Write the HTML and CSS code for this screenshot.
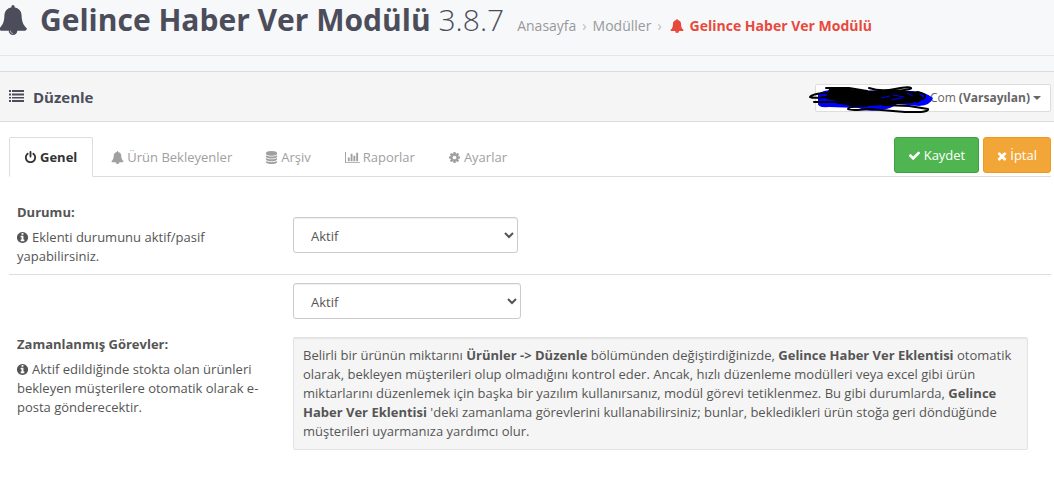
FILE: index.html
```html
<!DOCTYPE html>
<html lang="tr">
<head>
  <meta charset="UTF-8" />
  <meta name="viewport" content="width=device-width, initial-scale=1.0"/>
  <title>Gelince Haber Ver Modülü</title>
  <link rel="stylesheet" href="styles.css">
</head>
<body>

  <!-- shared icons -->
  <svg class="sprite" aria-hidden="true">
    <symbol id="bell" viewBox="0 0 1792 1792"><path d="M912 1696q0-16-16-16-59 0-101.500-42.500t-42.500-101.500q0-16-16-16t-16 16q0 73 51.500 124.500t124.500 51.500q16 0 16-16zm816-288q0 52-38 90t-90 38h-448q0 106-75 181t-181 75-181-75-75-181h-448q-52 0-90-38t-38-90q50-42 91-88t85-119.500 74.500-158.500 50-206 19.500-260q0-152 117-282.500t307-158.500q-8-19-8-39 0-40 28-68t68-28 68 28 28 68q0 20-8 39 190 28 307 158.500t117 282.500q0 139 19.500 260t50 206 74.500 158.500 85 119.500 91 88z"/></symbol>
    <symbol id="power" viewBox="0 0 1792 1792"><path d="M1664 896q0 156-61 298t-164 245-245 164-298 61-298-61-245-164-164-245-61-298q0-182 80.500-343t226.500-270q43-32 95.500-25t83.500 50q32 42 24.500 94.500t-49.500 84.500q-98 74-151.500 181t-53.500 228q0 104 40.500 198.500t109.500 163.500 163.500 109.500 198.500 40.500 198.500-40.500 163.500-109.500 109.500-163.500 40.500-198.500q0-121-53.500-228t-151.500-181q-42-32-49.500-84.500t24.500-94.500q31-43 84-50t95 25q146 109 226.500 270t80.500 343zm-640-768v640q0 52-38 90t-90 38-90-38-38-90v-640q0-52 38-90t90-38 90 38 38 90z"/></symbol>
    <symbol id="database" viewBox="0 0 1792 1792"><path d="M896 768q237 0 443-43t325-127v170q0 69-103 128t-280 93.500-385 34.500-385-34.500-280-93.500-103-128v-170q119 84 325 127t443 43zm0 768q237 0 443-43t325-127v170q0 69-103 128t-280 93.500-385 34.500-385-34.500-280-93.500-103-128v-170q119 84 325 127t443 43zm0-384q237 0 443-43t325-127v170q0 69-103 128t-280 93.500-385 34.500-385-34.500-280-93.500-103-128v-170q119 84 325 127t443 43zm0-1152q208 0 385 34.500t280 93.500 103 128v128q0 69-103 128t-280 93.500-385 34.500-385-34.500-280-93.500-103-128v-128q0-69 103-128t280-93.500 385-34.500z"/></symbol>
    <symbol id="chart" viewBox="0 0 2048 1792"><path d="M640 896v512h-256v-512h256zm384-512v1024h-256v-1024h256zm1024 1152v128h-2048v-1536h128v1408h1920zm-640-896v768h-256v-768h256zm384-384v1152h-256v-1152h256z"/></symbol>
    <symbol id="cog" viewBox="0 0 1792 1792"><path d="M1152 896q0-106-75-181t-181-75-181 75-75 181 75 181 181 75 181-75 75-181zm512-109v222q0 12-8 23t-20 13l-185 28q-19 54-39 91 35 50 107 138 10 12 10 25t-9 23q-27 37-99 108t-94 71q-12 0-26-9l-138-108q-44 23-91 38-16 136-29 186-7 28-36 28h-222q-14 0-24.500-8.500t-11.500-21.500l-28-184q-49-16-90-37l-141 107q-10 9-25 9-14 0-25-11-126-114-165-168-7-10-7-23 0-12 8-23 15-21 51-66.500t54-70.500q-27-50-41-99l-183-27q-13-2-21-12.500t-8-23.500v-222q0-12 8-23t19-13l186-28q14-46 39-92-40-57-107-138-10-12-10-24 0-10 9-23 26-36 98.500-107.500t94.500-71.500q13 0 26 10l138 107q44-23 91-38 16-136 29-186 7-28 36-28h222q14 0 24.500 8.500t11.500 21.500l28 184q49 16 90 37l142-107q9-9 24-9 13 0 25 10 129 119 165 170 7 8 7 22 0 12-8 23-15 21-51 66.500t-54 70.500q26 50 41 98l183 28q13 2 21 12.500t8 23.500z"/></symbol>
    <symbol id="check" viewBox="0 0 1792 1792"><path d="M1671 566q0 40-28 68l-724 724-136 136q-28 28-68 28t-68-28l-136-136-362-362q-28-28-28-68t28-68l136-136q28-28 68-28t68 28l294 295 656-657q28-28 68-28t68 28l136 136q28 28 28 68z"/></symbol>
    <symbol id="times" viewBox="200 200 1392 1392"><path d="M1490 1322q0 40-28 68l-136 136q-28 28-68 28t-68-28l-294-294-294 294q-28 28-68 28t-68-28l-136-136q-28-28-28-68t28-68l294-294-294-294q-28-28-28-68t28-68l136-136q28-28 68-28t68 28l294 294 294-294q28-28 68-28t68 28l136 136q28 28 28 68t-28 68l-294 294 294 294q28 28 28 68z"/></symbol>
    <symbol id="list" viewBox="0 0 15 12"><path d="M0 0h2v2H0zM3 0h12v2H3zM0 4h2v1H0zM3 4h12v1H3zM0 7h2v1H0zM3 7h12v1H3zM0 10h2v2H0zM3 10h12v2H3z"/><path opacity=".5" d="M0 3h2v1H0zM3 3h12v1H3zM0 5h2v1H0zM3 5h12v1H3zM0 8h2v1H0zM3 8h12v1H3z"/></symbol>
    <symbol id="info" viewBox="0 0 1792 1792"><path d="M1152 1376v-160q0-14-9-23t-23-9h-96v-512q0-14-9-23t-23-9h-320q-14 0-23 9t-9 23v160q0 14 9 23t23 9h96v320h-96q-14 0-23 9t-9 23v160q0 14 9 23t23 9h448q14 0 23-9t9-23zm-128-896v-160q0-14-9-23t-23-9h-192q-14 0-23 9t-9 23v160q0 14 9 23t23 9h192q14 0 23-9t9-23zm640 416q0 209-103 385.500t-279.500 279.500-385.500 103-385.500-103-279.500-279.500-103-385.500 103-385.500 279.500-279.500 385.500-103 385.500 103 279.500 279.500 103 385.500z"/></symbol>
  </svg>

  <header class="page-header">
    <h1><svg class="title-icon"><use href="#bell"/></svg><strong>Gelince Haber Ver Modülü</strong> 3.8.7</h1>
    <nav class="breadcrumb">
      <a href="#">Anasayfa</a>
      <span class="sep">›</span>
      <a href="#">Modüller</a>
      <span class="sep">›</span>
      <a href="#" class="current"><svg class="icon"><use href="#bell"/></svg>Gelince Haber Ver Modülü</a>
    </nav>
  </header>

  <div class="panel-heading">
    <h2><svg class="list-icon"><use href="#list"/></svg>Düzenle</h2>
    <button type="button" class="store-btn">Com <b>(Varsayılan)</b><span class="caret"></span>
      <!-- store name scribbled out -->
      <svg class="scribble" viewBox="0 0 126 28" aria-hidden="true">
        <path fill="#0000ff" d="M9 8Q14 4 24 4L104 5Q117 6 124 12 122 19 110 20L88 18Q82 23 72 24 58 26 50 22L20 21Q8 22 9 17Z"/>
        <path fill="#000" d="M20 3L42 3 58 5 82 4 108 6 114 11 108 16 84 17 66 19 40 19 28 15 17 11Z"/>
        <g fill="none" stroke="#000" stroke-width="2" stroke-linecap="round" stroke-linejoin="round">
          <path d="M17 2L40 2 58 5M60 2Q72 6 86 3T102 2Q104 4 72 6M22 7Q4 7 1 11 5 13 26 10M5 16L26 16 48 20M17 12L60 19 104 16"/>
          <path d="M58 20Q40 20 39 23 42 25 60 23L96 26 112 26Q120 25 119 23L100 20 74 19M108 6Q119 8 115 12L108 16"/>
        </g>
        <path fill="none" stroke="#0000ff" d="M72 12L81 10M84 9L95 11M82 14L93 12M98 7L104 10"/>
      </svg>
    </button>
  </div>

  <main class="content">
    <div class="toolbar">
      <nav class="tabs">
        <a href="#" class="active"><svg class="icon narrow"><use href="#power"/></svg>Genel</a>
        <a href="#"><svg class="icon"><use href="#bell"/></svg>Ürün Bekleyenler</a>
        <a href="#"><svg class="icon narrow"><use href="#database"/></svg>Arşiv</a>
        <a href="#"><svg class="icon wide"><use href="#chart"/></svg>Raporlar</a>
        <a href="#"><svg class="icon narrow"><use href="#cog"/></svg>Ayarlar</a>
      </nav>
      <div class="actions">
        <button type="button" class="btn save"><svg class="icon"><use href="#check"/></svg>Kaydet</button>
        <button type="button" class="btn cancel"><svg class="icon small"><use href="#times"/></svg>İptal</button>
      </div>
    </div>

    <form>
      <div class="row">
        <div class="desc">
          <label for="status">Durumu:</label>
          <p><svg class="icon narrow"><use href="#info"/></svg>Eklenti durumunu aktif/pasif yapabilirsiniz.</p>
        </div>
        <div class="field">
          <select id="status" class="status">
            <option>Aktif</option>
            <option>Pasif</option>
          </select>
        </div>
      </div>

      <div class="row">
        <div class="desc">
          <label for="cron">Zamanlanmış Görevler:</label>
          <p><svg class="icon narrow"><use href="#info"/></svg>Aktif edildiğinde stokta olan ürünleri bekleyen müşterilere otomatik olarak e-posta gönderecektir.</p>
        </div>
        <div class="field">
          <select id="cron" class="cron">
            <option>Aktif</option>
            <option>Pasif</option>
          </select>
          <div class="well">Belirli bir ürünün miktarını <b>Ürünler -&gt; Düzenle</b> bölümünden değiştirdiğinizde, <b>Gelince Haber Ver Eklentisi</b> otomatik olarak, bekleyen müşterileri olup olmadığını kontrol eder. Ancak, hızlı düzenleme modülleri veya excel gibi ürün miktarlarını düzenlemek için başka bir yazılım kullanırsanız, modül görevi tetiklenmez. Bu gibi durumlarda, <b>Gelince Haber Ver Eklentisi</b> 'deki zamanlama görevlerini kullanabilirsiniz; bunlar, bekledikleri ürün stoğa geri döndüğünde müşterileri uyarmanıza yardımcı olur.</div>
        </div>
      </div>
    </form>
  </main>

</body>
</html>
```
FILE: styles.css
```css
* {
  box-sizing: border-box;
}
body {
  margin: 0;
  background: #fff;
  color: #555;
  font-family: "Open Sans", sans-serif;
  font-size: 13px;
  line-height: 19px;
}
a {
  color: inherit;
  text-decoration: none;
}
svg {
  fill: currentColor;
}
.sprite {
  position: absolute;
  width: 0;
  height: 0;
}
.icon {
  width: 13px;
  height: 13px;
  margin-right: 3px;
  vertical-align: -2px;
}
.icon.wide {
  width: 15px;
}
.icon.narrow {
  margin-left: -1px;
}
.icon.small {
  width: 10px;
  height: 10px;
  vertical-align: -1px;
}

/* page title */
.page-header {
  display: flex;
  align-items: baseline;
  gap: 13px;
  height: 56px;
  background: #f7f8fa;
  border-bottom: 1px solid #e4e6e8;
}
h1 {
  margin: 0;
  color: #4c4d5a;
  font-size: 30px;
  font-weight: 300;
  line-height: 40px;
  white-space: nowrap;
}
h1 strong {
  font-weight: 700;
}
.title-icon {
  width: 30px;
  height: 30px;
  margin: 0 12px 0 -2px;
  vertical-align: -4px;
}
.breadcrumb {
  display: flex;
  gap: 6px;
  color: #999;
  font-size: 14px;
  white-space: nowrap;
}
.breadcrumb .sep {
  color: #bbb;
}
.breadcrumb .current {
  margin-left: 2px;
  color: #e9493c;
  font-weight: 700;
}
.breadcrumb .icon {
  width: 14px;
  height: 14px;
  margin-right: 6px;
}

/* panel heading */
.panel-heading {
  display: flex;
  align-items: center;
  justify-content: space-between;
  height: 51px;
  margin-top: 15px;
  padding: 2px 3px 0 9px;
  background: #f5f5f5;
  border-top: 1px solid #dcdcdc;
  border-bottom: 1px solid #dcdcdc;
  box-shadow: 0 -15px #f7f8fa;
}
h2 {
  margin: 0;
  color: #4c4d5a;
  font-size: 15px;
  font-weight: 700;
}
.list-icon {
  width: 15px;
  height: 12px;
  margin-right: 9px;
  vertical-align: 1px;
}
.store-btn {
  position: relative;
  display: flex;
  align-items: center;
  justify-content: flex-end;
  gap: 3px;
  width: 236px;
  height: 28px;
  padding: 0 9px;
  background: #fff;
  border: 1px solid #ddd;
  border-radius: 2px;
  color: #666;
  font: 12px "Open Sans", sans-serif;
  cursor: pointer;
}
.caret {
  border: 4px solid transparent;
  border-top-color: #666;
  border-bottom: 0;
}
.scribble {
  position: absolute;
  top: 1px;
  left: -7px;
  width: 126px;
  height: 28px;
}

/* tabs and buttons */
.content {
  padding: 15px 3px 0 9px;
}
.toolbar {
  display: flex;
  justify-content: space-between;
  border-bottom: 1px solid #ddd;
}
.tabs {
  display: flex;
  gap: 2px;
  margin-bottom: -1px;
}
.tabs a {
  padding: 10px 15px 9px;
  border: 1px solid transparent;
  border-radius: 2px 2px 0 0;
  color: #a0a0a0;
}
.tabs .active {
  background: #fff;
  border-color: #ddd;
  border-bottom-color: #fff;
  color: #333;
  font-weight: 700;
}
.actions {
  display: flex;
  align-items: flex-start;
  gap: 4px;
}
.btn {
  height: 36px;
  padding: 0 13px;
  border: 1px solid;
  border-radius: 3px;
  color: #fff;
  font: 13px "Open Sans", sans-serif;
  cursor: pointer;
}
.save {
  background: #4eb550;
  border-color: #409f43;
}
.cancel {
  background: #f3a638;
  border-color: #ef9a1c;
}

/* settings */
form {
  padding-top: 18px;
}
.row {
  display: grid;
  grid-template-columns: 276px 1fr;
  align-items: center;
}
.row + .row {
  border-top: 1px solid #ddd;
}
.desc,
.field {
  padding: 8px;
}
label {
  display: block;
  margin-bottom: 6px;
  font-weight: 700;
}
.desc p {
  margin: 0;
}
select {
  display: block;
  height: 36px;
  padding: 2px 0 0 13px;
  background: #fff;
  border: 1px solid #ccc;
  border-radius: 3px;
  box-shadow: inset 0 1px 1px #0001;
  color: #555;
  font: 13px "Open Sans", sans-serif;
}
.status {
  width: 225px;
}
.cron {
  width: 228px;
}
.well {
  margin: 18px 15px 18px 0;
  padding: 8px 9px;
  background: #f5f5f5;
  border: 1px solid #e3e3e3;
  border-radius: 2px;
  box-shadow: inset 0 1px 1px #0001;
}
```
